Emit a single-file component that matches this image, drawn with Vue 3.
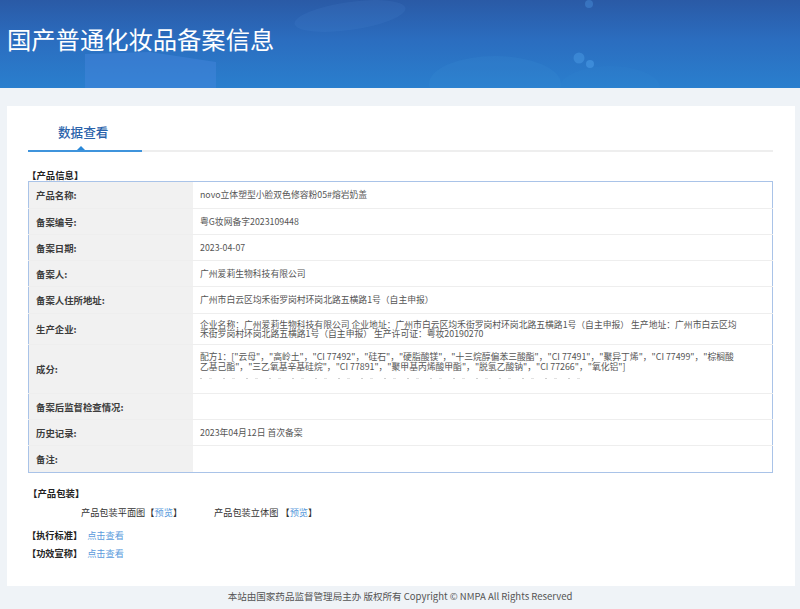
<template>
  <div class="page">
    <header class="banner">
      <svg class="banner-art" width="800" height="88" viewBox="0 0 800 88">
        <polygon points="85,54 150,52 216,62 216,88 85,88" fill="#4a8ae0" opacity="0.4" />
        <ellipse cx="350" cy="16" rx="56" ry="14" fill="#5a96dc" opacity="0.12" transform="rotate(-8 350 16)" />
        <ellipse cx="495" cy="84" rx="66" ry="28" fill="#3f94d8" opacity="0.16" />
        <ellipse cx="610" cy="88" rx="50" ry="22" fill="#3f94d8" opacity="0.1" />
        <circle cx="589" cy="4" r="4" fill="#4a90dc" opacity="0.45" />
        <circle cx="579" cy="58" r="5.5" fill="#4a9ae4" opacity="0.5" />
        <circle cx="590" cy="64" r="4" fill="#4a9ae4" opacity="0.6" />
      </svg>
      <h1>国产普通化妆品备案信息</h1>
    </header>

    <main class="card">
      <div class="tabs">
        <span class="tab">数据查看</span>
      </div>

      <h3 class="section first">【产品信息】</h3>
      <table class="info">
        <tbody>
          <tr v-for="row in rows" :key="row.label" :class="row.type" :style="{ height: row.height + 'px' }">
            <th>{{ row.label }}:</th>
            <td>
              {{ row.value }}
              <div v-if="row.type === 'ingredients'" class="cut-line"></div>
            </td>
          </tr>
        </tbody>
      </table>

      <h3 class="section pack">【产品包装】</h3>
      <div class="pack-row">
        <span class="pack-item">产品包装平面图【<a>预览</a>】</span>
        <span class="pack-item">产品包装立体图 【<a>预览</a>】</span>
      </div>
      <div class="extra"><b>【执行标准】</b><a>点击查看</a></div>
      <div class="extra"><b>【功效宣称】</b><a>点击查看</a></div>
    </main>

    <footer class="foot">本站由国家药品监督管理局主办 版权所有 Copyright © NMPA All Rights Reserved</footer>
  </div>
</template>

<script setup>
const rows = [
  { label: '产品名称', height: 27, value: 'novo立体塑型小脸双色修容粉05#熔岩奶盖' },
  { label: '备案编号', height: 26, value: '粤G妆网备字2023109448' },
  { label: '备案日期', height: 26, value: '2023-04-07' },
  { label: '备案人', height: 26, value: '广州爱莉生物科技有限公司' },
  { label: '备案人住所地址', height: 27, value: '广州市白云区均禾街罗岗村环岗北路五横路1号（自主申报）' },
  {
    label: '生产企业',
    height: 31,
    type: 'tight',
    value: '企业名称：广州爱莉生物科技有限公司 企业地址：广州市白云区均禾街罗岗村环岗北路五横路1号（自主申报） 生产地址：广州市白云区均禾街罗岗村环岗北路五横路1号（自主申报） 生产许可证：粤妆20190270'
  },
  {
    label: '成分',
    height: 49,
    type: 'ingredients',
    value: '配方1：["云母"，"高岭土"，"CI 77492"，"硅石"，"硬脂酸镁"，"十三烷醇偏苯三酸酯"，"CI 77491"，"聚异丁烯"，"CI 77499"，"棕榈酸乙基己酯"，"三乙氧基辛基硅烷"，"CI 77891"，"聚甲基丙烯酸甲酯"，"脱氢乙酸钠"，"CI 77266"，"氧化铝"]'
  },
  { label: '备案后监督检查情况', height: 26, value: '' },
  { label: '历史记录', height: 26, value: '2023年04月12日 首次备案' },
  { label: '备注', height: 27, value: '' }
]
</script>

<style>
html,
body {
  margin: 0;
  background: #eff3f7;
}
</style>

<style scoped>
.page {
  height: 609px;
  overflow: hidden;
  background: #eff3f7;
  font-family: "Noto Sans CJK SC", "Open Sans", sans-serif;
  font-size: 9.2px;
  color: #555;
}

.banner {
  position: relative;
  height: 88px;
  background: linear-gradient(180deg, #2a5aa6 0%, #2b6dbf 45%, #2a7fce 100%);
}

.banner-art {
  position: absolute;
  left: 0;
  top: 0;
}

.banner h1 {
  position: relative;
  margin: 0;
  padding: 23px 0 0 7px;
  font-size: 24.3px;
  font-weight: 400;
  line-height: 32px;
  color: #fff;
}

.card {
  margin: 18px 5px 0 7px;
  height: 480px;
  box-sizing: border-box;
  padding: 0 22px 0 21px;
  background: #fff;
}

.tabs {
  height: 44px;
  border-bottom: 2px solid #eee;
}

.tab {
  position: relative;
  display: block;
  width: 84px;
  height: 44px;
  padding-left: 30px;
  border-bottom: 2px solid #3f94dc;
  font-size: 12.6px;
  font-weight: 500;
  line-height: 51px;
  color: #2b63ab;
}

.tab::after {
  content: "";
  position: absolute;
  left: 49px;
  bottom: 0;
  border: 4px solid transparent;
  border-top: 0;
  border-bottom-color: #2a88d8;
}

.section {
  margin: 0;
  font-size: 9.4px;
  font-weight: 700;
  color: #222;
  line-height: 12px;
}

.section.first {
  margin-top: 17px;
  margin-left: -1px;
}

.info {
  width: 100%;
  border-collapse: collapse;
  table-layout: fixed;
  border: 1px solid #a9c3e8;
}

.info tr {
  border-bottom: 1px solid #eee;
}

.info tr:last-child {
  border-bottom: 0;
}

.info th {
  width: 157px;
  padding: 0 0 0 7px;
  background: #f1f1f1;
  font-size: 9.4px;
  font-weight: 700;
  color: #3c3c3c;
  text-align: left;
}

.info td {
  padding: 0 33px 0 7px;
  font-size: 8.8px;
  color: #555;
  line-height: 12px;
}

.tight td {
  line-height: 9.5px;
}

.ingredients td {
  position: relative;
  vertical-align: top;
  padding-top: 7px;
  line-height: 9.8px;
}

.cut-line {
  width: 380px;
  height: 1px;
  margin-top: 6px;
  background: repeating-linear-gradient(90deg, #d0d0d0 0 2px, transparent 2px 9px, #e2e2e2 9px 12px, transparent 12px 23px);
}

.section.pack {
  margin-top: 14px;
}

.pack-row {
  display: flex;
  gap: 32px;
  margin-top: 7px;
  padding-left: 53px;
  line-height: 13px;
  color: #333;
}

.pack-item a,
.extra a {
  color: #5b9bdc;
}

.extra {
  margin-top: 5px;
  line-height: 13px;
  margin-left: -1px;
}

.pack-row + .extra {
  margin-top: 10px;
}

.extra b {
  color: #222;
  margin-right: 5px;
}

.foot {
  margin-top: 4px;
  text-align: center;
  font-size: 9.55px;
  line-height: 13px;
  color: #555;
}
</style>
